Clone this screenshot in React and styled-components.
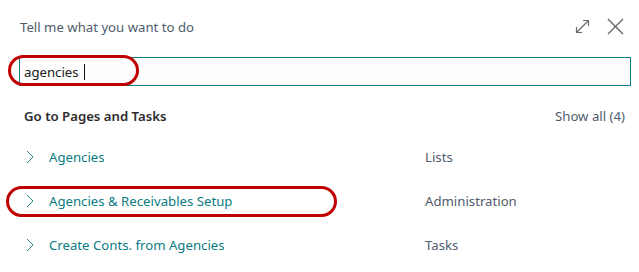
import React from 'react';
import styled, { createGlobalStyle } from 'styled-components';

const GlobalStyle = createGlobalStyle`
  body {
    margin: 0;
    background: #ffffff;
    font-family: 'Noto Sans', 'Open Sans', sans-serif;
  }
`;

const Dialog = styled.div`
  position: relative;
  width: 639px;
  height: 272px;
  background: #ffffff;
  overflow: hidden;
`;

const Header = styled.div`
  display: flex;
  align-items: center;
  justify-content: space-between;
  height: 52px;
  padding: 0 15px 0 20px;
`;

const Title = styled.div`
  font-size: 13.2px;
  color: #505c6d;
  padding-top: 1px;
`;

const HeaderIcons = styled.div`
  display: flex;
  align-items: center;
  gap: 15px;
`;

const IconButton = styled.span`
  display: flex;
  width: 18px;
  height: 18px;
  align-items: center;
  justify-content: center;
  color: #6b6b6b;
`;

const SearchBox = styled.div`
  display: flex;
  align-items: center;
  margin: 5px 0 0 19px;
  width: 612px;
  height: 29px;
  box-sizing: border-box;
  border: 1px solid #0b7d85;
  background: #fdfdfd;
  padding-left: 4px;
  font-size: 13.2px;
  color: #212121;
`;

const Caret = styled.span`
  display: inline-block;
  width: 1px;
  height: 16px;
  margin-left: 5px;
  background: #111111;
`;

const SectionHeader = styled.div`
  display: flex;
  align-items: center;
  justify-content: space-between;
  height: 24px;
  margin-top: 18px;
  padding: 0 14px 0 24px;
`;

const SectionTitle = styled.div`
  font-size: 13.2px;
  font-weight: 600;
  color: #2b2b2b;
`;

const ShowAll = styled.div`
  font-size: 13.2px;
  color: #505c6d;
`;

const List = styled.div`
  margin-top: 7px;
`;

const Row = styled.div`
  display: grid;
  grid-template-columns: 23px 376px 1fr;
  align-items: center;
  height: 44px;
  padding-left: 26px;
`;

const RowName = styled.div`
  font-size: 13.2px;
  color: #0a7c82;
`;

const RowCategory = styled.div`
  font-size: 13.2px;
  color: #505c6d;
`;

const Highlight = styled.span`
  position: absolute;
  left: ${(p) => p.left}px;
  top: ${(p) => p.top}px;
  width: ${(p) => p.width}px;
  height: ${(p) => p.height}px;
  box-sizing: border-box;
  border: 3px solid #c00000;
  border-radius: 999px;
  pointer-events: none;
`;

const Chevron = () => (
  <svg width="8" height="14" viewBox="0 0 8 14">
    <polyline points="1,1 7,7 1,13" fill="none" stroke="#2b8a91" strokeWidth="1" />
  </svg>
);

const ExpandIcon = () => (
  <svg width="15" height="15" viewBox="0 0 15 15">
    <g fill="none" stroke="currentColor" strokeWidth="1.2">
      <line x1="1.5" y1="13.5" x2="13.5" y2="1.5" />
      <polyline points="8,1.5 13.5,1.5 13.5,7" />
      <polyline points="1.5,8 1.5,13.5 7,13.5" />
    </g>
  </svg>
);

const CloseIcon = () => (
  <svg width="17" height="17" viewBox="0 0 17 17">
    <g stroke="currentColor" strokeWidth="1.5">
      <line x1="1" y1="1" x2="16" y2="16" />
      <line x1="16" y1="1" x2="1" y2="16" />
    </g>
  </svg>
);

const results = [
  { name: 'Agencies', category: 'Lists' },
  { name: 'Agencies & Receivables Setup', category: 'Administration' },
  { name: 'Create Conts. from Agencies', category: 'Tasks' },
];

const App = () => {
  return (
    <Dialog>
      <GlobalStyle />
      <Header>
        <Title>Tell me what you want to do</Title>
        <HeaderIcons>
          <IconButton><ExpandIcon /></IconButton>
          <IconButton><CloseIcon /></IconButton>
        </HeaderIcons>
      </Header>
      <SearchBox>
        agencies
        <Caret />
      </SearchBox>
      <SectionHeader>
        <SectionTitle>Go to Pages and Tasks</SectionTitle>
        <ShowAll>Show all (4)</ShowAll>
      </SectionHeader>
      <List>
        {results.map((r) => (
          <Row key={r.name}>
            <Chevron />
            <RowName>{r.name}</RowName>
            <RowCategory>{r.category}</RowCategory>
          </Row>
        ))}
      </List>
      <Highlight left={8} top={55} width={131} height={31} />
      <Highlight left={6} top={186} width={331} height={31} />
    </Dialog>
  );
};

export default App;
